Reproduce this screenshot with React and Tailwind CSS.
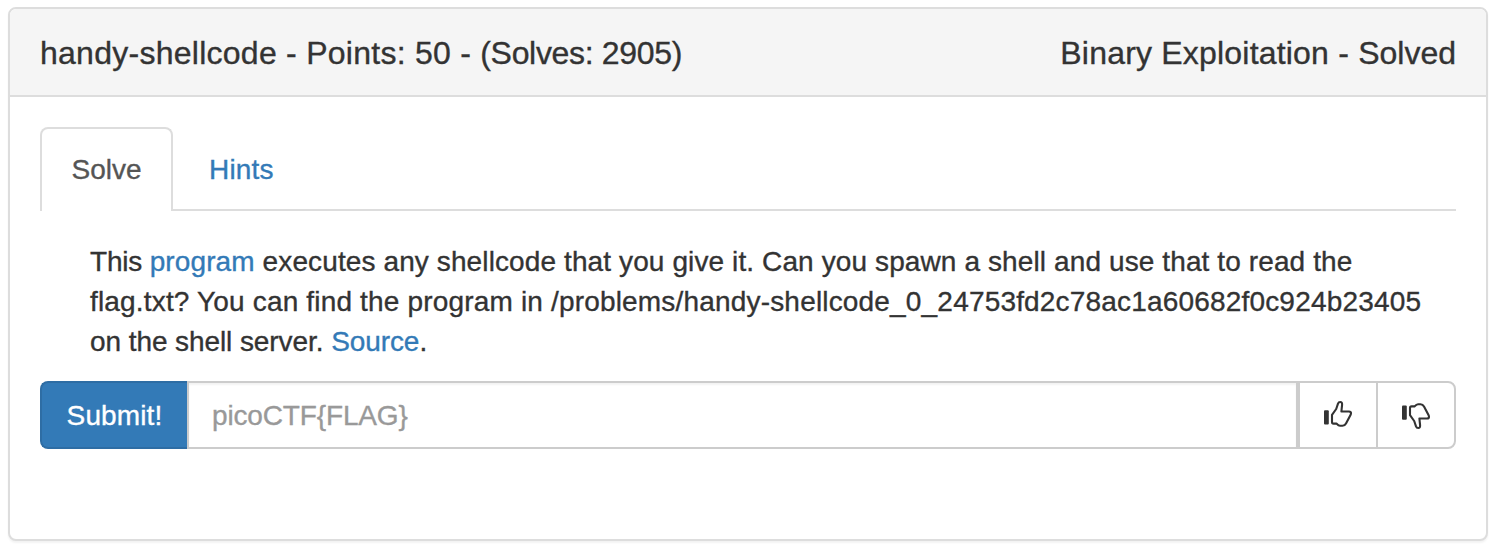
function Thumb({ down = false }) {
  return (
    <svg width="30" height="28" viewBox="0 0 30 28" className={down ? 'mt-0.5 -scale-y-100' : '-mt-0.5'} aria-hidden="true">
      <rect x="1" y="10.2" width="4.8" height="14.2" rx="1" fill="#333" />
      <path
        d="M9 14.8 13.2 9 15 3.6Q15.6 2 17.2 2 19.3 2 19.1 4.6L18.4 11.5H26Q28 11.5 28 13 28 14 27.5 15L23 23.6Q21.8 25.8 19.5 25.8H17Q15.6 25.8 13.4 23.6H10.5Q9 23.6 9 22Z"
        fill="none"
        stroke="#333"
        strokeWidth="2.1"
        strokeLinejoin="round"
      />
    </svg>
  );
}

export default function App() {
  return (
    <div className="h-[550px] bg-white pt-[7px] pr-3 pl-2 font-['Liberation_Sans',sans-serif] text-[28px] leading-10 text-[#333] [-webkit-text-stroke:0.35px]">
      <section className="h-[534px] rounded-lg border-2 border-[#ddd] bg-white shadow-[0_2px_2px_rgba(0,0,0,0.05)]">
        <header className="flex h-[88px] items-center justify-between rounded-t-md border-b-2 border-[#ddd] bg-[#f5f5f5] px-[30px] pt-0.5 text-[32px] leading-9">
          <h3 className="tracking-[0.26px]">handy-shellcode - Points: 50 - <span className="tracking-[-0.33px]">(Solves: 2905)</span></h3>
          <h3 className="tracking-[0.2px]">Binary Exploitation - <span className="tracking-normal">Solved</span></h3>
        </header>
        <div className="p-[30px]">
          <nav className="flex h-[84px] border-b-2 border-[#ddd]">
            <a className="flex h-[84px] w-[133px] justify-center rounded-t-lg border-2 border-b-0 border-[#ddd] bg-white pt-[21px] text-[#555]"><span>Solve</span></a>
            <a className="ml-1 px-8 pt-[23px] tracking-[0.2px] text-[#337ab7]"><span>Hints</span></a>
          </nav>
          <p className="mt-[31px] pl-[50px] whitespace-nowrap">
            <span className="tracking-[0.11px]"><span className="tracking-[-0.2px]">This </span><a className="text-[#337ab7]">program</a> executes any shellcode that you give it. Can you spawn a shell and use that to read the</span><br />
            <span className="tracking-[0.17px]">flag.txt? You can find the program in <span className="tracking-[0.18px]">/problems/handy-shellcode_0_24753fd2c78ac1a60682f0c924b23405</span></span><br />
            <span className="tracking-[-0.08px]">on the shell server. <a className="text-[#337ab7]">Source</a>.</span>
          </p>
          <form className="mt-[19px] flex h-[68px]">
            <button type="button" className="w-[147px] rounded-l-lg border-2 border-r-0 border-[#2e6da4] bg-[#337ab7] pt-0.5 tracking-[0.12px] text-white"><span>Submit!</span></button>
            <input
              className="w-[1111px] border-2 border-[#ccc] bg-white px-[23px] pt-0.5 tracking-[-0.15px] shadow-[inset_0_2px_2px_rgba(0,0,0,0.05)] placeholder:text-[#999]"
              placeholder="picoCTF{FLAG}"
            />
            <button type="button" aria-label="Like" className="flex w-20 items-center justify-center border-2 border-[#ccc] bg-white"><Thumb /></button>
            <button type="button" aria-label="Dislike" className="-ml-0.5 flex w-20 items-center justify-center rounded-r-lg border-2 border-[#ccc] bg-white"><Thumb down /></button>
          </form>
        </div>
      </section>
    </div>
  );
}
